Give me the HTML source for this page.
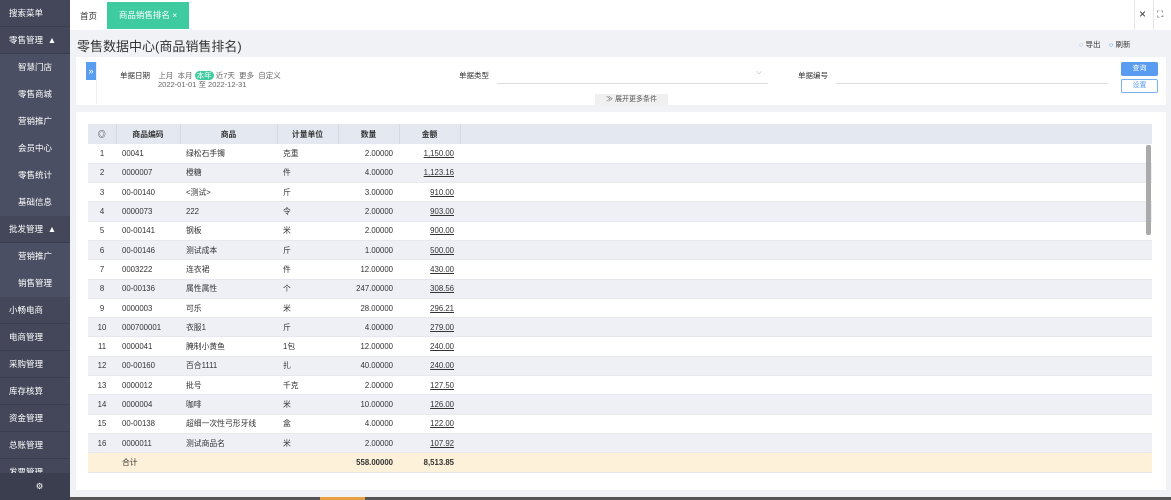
<!DOCTYPE html>
<html><head><meta charset="utf-8"><style>
*{margin:0;padding:0;box-sizing:border-box}
body{width:1171px;height:500px;overflow:hidden;background:#f0f2f5;font-family:"Liberation Sans","Noto Sans CJK SC",sans-serif;font-size:8px;color:#333;position:relative}
.side{position:absolute;left:0;top:0;width:70px;height:500px;background:#434759;overflow:hidden}
.side div{height:27px;line-height:27px;color:#fff;font-size:8.5px;border-bottom:1px solid #393d4e;padding-left:9px}
.side .sub{background:#4b4f63;padding-left:18px;border-bottom:none}
.gear{position:absolute;left:0;bottom:0;width:70px;height:22px;background:#3a3e4f;color:#fff;text-align:center;line-height:22px;font-size:11px}
.tabs{position:absolute;left:70px;top:0;right:0;height:30px;background:#fff}
.tab{position:absolute;top:0;height:29px;line-height:32px;font-size:8.5px}
.title{position:absolute;left:77px;top:36px;font-size:13px;color:#333}
.card{position:absolute;background:#fff}
table{border-collapse:collapse;position:absolute;left:88px;top:124px;width:1064px;table-layout:fixed}
td,th{font-size:7.8px;font-weight:normal;padding:0 6px;white-space:nowrap;overflow:hidden}
td{height:19.3px}
th{background:#e4e8f1;height:20px;font-weight:bold;border-right:1px solid #d5d9e2;text-align:center}
tr:nth-child(odd) td{background:#eef0f6}
tr td{border-bottom:1px solid #e6e8ee}
.r{text-align:right}.u{text-decoration:underline}.c{text-align:center}
tr.tot td{background:#fdf1d9;font-weight:bold}
</style></head><body>
<div class="side">
<div>搜索菜单</div><div>零售管理 &nbsp;▲</div>
<div class="sub">智慧门店</div><div class="sub">零售商城</div><div class="sub">营销推广</div><div class="sub">会员中心</div><div class="sub">零售统计</div><div class="sub">基础信息</div>
<div>批发管理 &nbsp;▲</div>
<div class="sub">营销推广</div><div class="sub">销售管理</div>
<div>小畅电商</div><div>电商管理</div><div>采购管理</div><div>库存核算</div><div>资金管理</div><div>总账管理</div><div>发票管理</div>
<div class="gear">⚙</div>
</div>
<div class="tabs">
<div class="tab" style="left:10px;color:#333">首页</div>
<div class="tab" style="left:37px;top:2px;height:27px;line-height:27px;width:82px;background:#3ecba0;color:#fff;text-align:center">商品销售排名 ×</div>
<div style="position:absolute;left:1064px;top:0;width:1px;height:30px;background:#e6e6e6"></div>
<div style="position:absolute;left:1083px;top:0;width:1px;height:30px;background:#e6e6e6"></div>
<div style="position:absolute;left:1069px;top:7px;font-size:12px">×</div>
<div style="position:absolute;left:1087px;top:9px;font-size:9px">⛶</div>
</div>
<div class="title">零售数据中心(商品销售排名)</div>
<div style="position:absolute;left:1079px;top:39px;font-size:7.5px"><span style="color:#4a90e2">◌</span> 导出 &nbsp;&nbsp; <span style="color:#4a90e2">○</span> 刷新</div>
<div class="card" style="left:76px;top:57px;width:1090px;height:48px"></div>
<div style="position:absolute;left:86px;top:62px;width:10px;height:18px;background:#5a9cf0;color:#fff;font-size:9px;text-align:center;line-height:18px">»</div>
<div style="position:absolute;left:96px;top:62px;width:1px;height:42px;background:#eee"></div>
<div style="position:absolute;left:120px;top:70px;font-size:7.5px">单据日期 &nbsp;&nbsp; <span style="color:#666">上月 &nbsp;本月 <span style="background:#3ecba0;color:#fff;border-radius:6px;padding:0 2px">本年</span> 近7天 &nbsp;更多 &nbsp;自定义</span></div>
<div style="position:absolute;left:158px;top:79px;font-size:7.5px;color:#666">2022-01-01 至 2022-12-31</div>
<div style="position:absolute;left:459px;top:70px;font-size:7.5px">单据类型</div>
<div style="position:absolute;left:497px;top:83px;width:271px;height:1px;background:#ddd"></div>
<div style="position:absolute;left:756px;top:67px;font-size:8px;color:#aaa">⌵</div>
<div style="position:absolute;left:798px;top:70px;font-size:7.5px">单据编号</div>
<div style="position:absolute;left:836px;top:83px;width:272px;height:1px;background:#ddd"></div>
<div style="position:absolute;left:1121px;top:62px;width:37px;height:14px;background:#5a9cf0;color:#fff;font-size:7px;text-align:center;line-height:14px;border-radius:2px">查询</div>
<div style="position:absolute;left:1121px;top:79px;width:37px;height:14px;border:1px solid #7ab0f0;color:#5a9cf0;font-size:7px;text-align:center;line-height:12px;border-radius:2px">设置</div>
<div style="position:absolute;left:595px;top:94px;width:73px;height:11px;background:#f0f0f0;color:#555;font-size:7px;text-align:center;line-height:11px">≫ 展开更多条件</div>
<div class="card" style="left:76px;top:112px;width:1090px;height:378px"></div>
<table>
<colgroup><col style="width:28px"><col style="width:64px"><col style="width:97px"><col style="width:61px"><col style="width:61px"><col style="width:61px"><col></colgroup>
<tr><th>◎</th><th>商品编码</th><th>商品</th><th>计量单位</th><th>数量</th><th>金额</th><th style="border:none"></th></tr>
<tr><td class="c">1</td><td>00041</td><td>绿松石手镯</td><td>克重</td><td class="r">2.00000</td><td class="r u">1,150.00</td><td></td></tr>
<tr><td class="c">2</td><td>0000007</td><td>橙糖</td><td>件</td><td class="r">4.00000</td><td class="r u">1,123.16</td><td></td></tr>
<tr><td class="c">3</td><td>00-00140</td><td>&lt;测试&gt;</td><td>斤</td><td class="r">3.00000</td><td class="r u">910.00</td><td></td></tr>
<tr><td class="c">4</td><td>0000073</td><td>222</td><td>令</td><td class="r">2.00000</td><td class="r u">903.00</td><td></td></tr>
<tr><td class="c">5</td><td>00-00141</td><td>钢板</td><td>米</td><td class="r">2.00000</td><td class="r u">900.00</td><td></td></tr>
<tr><td class="c">6</td><td>00-00146</td><td>测试成本</td><td>斤</td><td class="r">1.00000</td><td class="r u">500.00</td><td></td></tr>
<tr><td class="c">7</td><td>0003222</td><td>连衣裙</td><td>件</td><td class="r">12.00000</td><td class="r u">430.00</td><td></td></tr>
<tr><td class="c">8</td><td>00-00136</td><td>属性属性</td><td>个</td><td class="r">247.00000</td><td class="r u">308.56</td><td></td></tr>
<tr><td class="c">9</td><td>0000003</td><td>可乐</td><td>米</td><td class="r">28.00000</td><td class="r u">296.21</td><td></td></tr>
<tr><td class="c">10</td><td>000700001</td><td>衣服1</td><td>斤</td><td class="r">4.00000</td><td class="r u">279.00</td><td></td></tr>
<tr><td class="c">11</td><td>0000041</td><td>腌制小黄鱼</td><td>1包</td><td class="r">12.00000</td><td class="r u">240.00</td><td></td></tr>
<tr><td class="c">12</td><td>00-00160</td><td>百合1111</td><td>扎</td><td class="r">40.00000</td><td class="r u">240.00</td><td></td></tr>
<tr><td class="c">13</td><td>0000012</td><td>批号</td><td>千克</td><td class="r">2.00000</td><td class="r u">127.50</td><td></td></tr>
<tr><td class="c">14</td><td>0000004</td><td>咖啡</td><td>米</td><td class="r">10.00000</td><td class="r u">126.00</td><td></td></tr>
<tr><td class="c">15</td><td>00-00138</td><td>超细一次性弓形牙线</td><td>盒</td><td class="r">4.00000</td><td class="r u">122.00</td><td></td></tr>
<tr><td class="c">16</td><td>0000011</td><td>测试商品名</td><td>米</td><td class="r">2.00000</td><td class="r u">107.92</td><td></td></tr>
<tr class="tot"><td></td><td style="font-weight:normal">合计</td><td></td><td></td><td class="r">558.00000</td><td class="r">8,513.85</td><td></td></tr>
</table>
<div style="position:absolute;left:1146px;top:145px;width:5px;height:90px;background:#aaa;border-radius:2px"></div>
<div style="position:absolute;left:70px;top:497px;width:1101px;height:3px;background:#555"></div>
<div style="position:absolute;left:320px;top:497px;width:45px;height:3px;background:#e8a040"></div>
</body></html>
